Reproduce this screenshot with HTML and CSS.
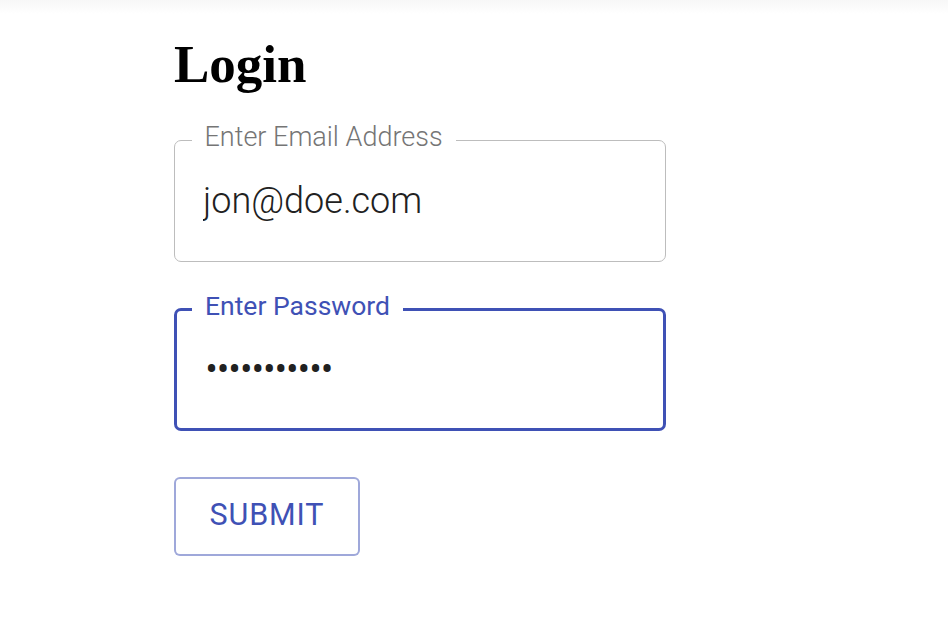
FILE: index.html
```html
<!DOCTYPE html>
<html lang="en">
<head>
<meta charset="utf-8">
<title>Login</title>
<link rel="stylesheet" href="styles.css">
</head>
<body>
<main class="page">
  <h1 class="title">Login</h1>
  <form class="login-form">
    <fieldset class="field">
      <legend class="field-label">Enter Email Address</legend>
      <input class="field-input" type="email" value="jon@doe.com">
    </fieldset>
    <fieldset class="field field-focused">
      <legend class="field-label">Enter Password</legend>
      <input class="field-input field-password" type="password" value="password123">
    </fieldset>
    <button class="submit" type="button">Submit</button>
  </form>
</main>
</body>
</html>
```

FILE: styles.css
```css
html, body {
  margin: 0;
  padding: 0;
}

body {
  background: #fff linear-gradient(to bottom, #f7f7f7 0, #ffffff 14px) no-repeat;
  font-family: Roboto, "Liberation Sans", Arial, sans-serif;
  min-height: 630px;
}

.page {
  padding: 34px 0 0 174px;
}

.title {
  margin: 0;
  font-family: "Liberation Serif", "Times New Roman", serif;
  font-weight: 700;
  font-size: 53px;
  line-height: 60px;
  color: #000;
}

.login-form {
  display: flex;
  flex-direction: column;
  align-items: flex-start;
  margin-top: 26.75px;
  width: 492px;
}

.field {
  box-sizing: border-box;
  width: 492px;
  margin: 0;
  padding: 0;
  border: 1.5px solid #bdbdbd;
  border-radius: 7px;
  min-width: 0;
}

.field + .field {
  margin-top: 28px;
}

.field-label {
  margin-left: 16.5px;
  padding: 0 13px 8px;
  font-size: 27px;
  font-weight: 300;
  line-height: 32px;
  color: #757575;
}

.field-input {
  display: block;
  box-sizing: border-box;
  width: 100%;
  height: 100.25px;
  margin: 0;
  padding: 19px 28px 39px;
  border: none;
  outline: none;
  background: transparent;
  font-family: Roboto, "Liberation Sans", Arial, sans-serif;
  font-size: 36px;
  font-weight: 300;
  line-height: 42px;
  color: #212121;
}

.field-focused {
  border: 3px solid #3f51b5;
}

.field-focused .field-label {
  margin-left: 15px;
  padding-bottom: 6px;
  font-size: 26.5px;
  font-weight: 400;
  color: #3f51b5;
}

.field-focused .field-input {
  height: 99.5px;
  padding: 21px 28px 36.5px 28.5px;
}

.field-password {
  font-weight: 400;
  letter-spacing: -0.6px;
}

.submit {
  margin-top: 46px;
  box-sizing: border-box;
  width: 186px;
  height: 79px;
  padding: 10.75px 0 12.75px;
  border: 2px solid rgba(63, 81, 181, 0.5);
  border-radius: 6px;
  background: #fff;
  font-family: Roboto, "Liberation Sans", Arial, sans-serif;
  font-size: 30.5px;
  font-weight: 400;
  line-height: 52.5px;
  letter-spacing: 0.02857em;
  text-transform: uppercase;
  color: #3f51b5;
  cursor: pointer;
}
```
